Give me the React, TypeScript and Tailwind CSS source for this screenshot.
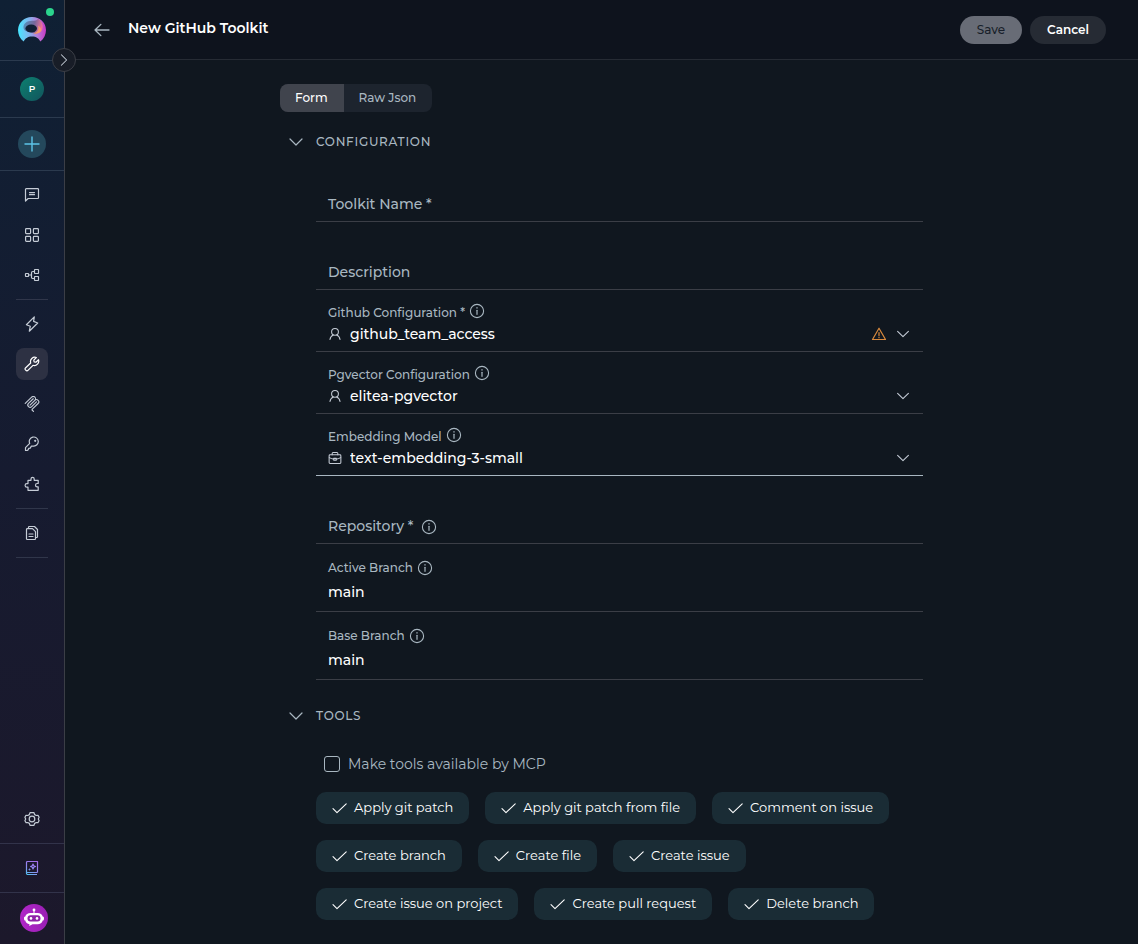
import React, { useState } from "react";
import clsx from "clsx";

type IconProps = { className?: string };

function Icon({
  children,
  className = "size-4",
}: {
  children: React.ReactNode;
  className?: string;
}) {
  return (
    <svg
      viewBox="0 0 16 16"
      fill="none"
      stroke="currentColor"
      strokeWidth="1.2"
      strokeLinejoin="round"
      strokeLinecap="round"
      className={clsx("shrink-0", className)}
      aria-hidden="true"
    >
      {children}
    </svg>
  );
}

const ChatIcon = () => (
  <Icon>
    <path d="M1.5 14V2.5a.8.8 0 0 1 .8-.8h11.4a.8.8 0 0 1 .8.8v8.2a.8.8 0 0 1-.8.8H4.2L1.5 14Z" />
    <path d="M5.5 5.6h5M5.5 7.7h5" />
  </Icon>
);

const GridIcon = () => (
  <Icon>
    <rect x="1.6" y="1.6" width="5" height="5" rx="0.8" />
    <rect x="9.4" y="1.6" width="5" height="5" rx="0.8" />
    <rect x="1.6" y="9.4" width="5" height="5" rx="0.8" />
    <rect x="9.4" y="9.4" width="5" height="5" rx="0.8" />
  </Icon>
);

const FlowIcon = () => (
  <Icon>
    <rect x="1.5" y="6.5" width="3" height="3" rx="0.4" />
    <rect x="10.5" y="2.5" width="4" height="4" rx="0.4" />
    <rect x="10.5" y="9.5" width="4" height="4" rx="0.4" />
    <path d="M4.5 8h3M10.5 4.5H8.8a1.3 1.3 0 0 0-1.3 1.3v4.4a1.3 1.3 0 0 0 1.3 1.3h1.7" />
  </Icon>
);

const BoltIcon = () => (
  <Icon>
    <path d="M10.3.9 2.4 8.7l3.9 1.5-1 5L13.7 7 9.6 5.4l.7-4.5Z" />
  </Icon>
);

const WrenchIcon = () => (
  <Icon>
    <path d="M12.3 1.5A4.4 4.4 0 0 0 6.7 7L1.7 11.7a1.7 1.7 0 0 0 2.5 2.5L9 9.3a4.4 4.4 0 0 0 5.5-5.6l-2.6 2.5-1.8-.3-.3-1.8 2.5-2.6Z" />
  </Icon>
);

const McpIcon = () => (
  <svg viewBox="0 0 24 24" fill="currentColor" className="size-4" aria-hidden="true">
    <path d="M15.688 2.343a2.588 2.588 0 00-3.61 0l-9.626 9.44a.863.863 0 01-1.203 0 .823.823 0 010-1.18l9.626-9.44a4.313 4.313 0 016.016 0 4.116 4.116 0 011.204 3.54 4.3 4.3 0 013.609 1.18l.05.05a4.115 4.115 0 010 5.9l-8.706 8.537a.274.274 0 000 .393l1.788 1.754a.823.823 0 010 1.18.863.863 0 01-1.203 0l-1.788-1.753a1.92 1.92 0 010-2.754l8.706-8.538a2.47 2.47 0 000-3.54l-.05-.049a2.588 2.588 0 00-3.607-.003l-7.172 7.034-.002.002-.098.097a.863.863 0 01-1.204 0 .823.823 0 010-1.18l7.273-7.133a2.47 2.47 0 00-.003-3.537z" />
    <path d="M14.485 4.703a.823.823 0 000-1.18.863.863 0 00-1.204 0l-7.119 6.982a4.115 4.115 0 000 5.9 4.314 4.314 0 006.016 0l7.12-6.982a.823.823 0 000-1.18.863.863 0 00-1.204 0l-7.119 6.982a2.588 2.588 0 01-3.61 0 2.47 2.47 0 010-3.54l7.12-6.982z" />
  </svg>
);

const KeyIcon = () => (
  <Icon>
    <path d="M5.7 7.4A4.5 4.5 0 1 1 9.3 10l-1.9.1-1.2 2-1.5.3-.5 1.3-1 .8H1.5v-2.9l4.2-4.2Z" />
    <circle cx="11.2" cy="4.8" r="0.5" />
  </Icon>
);

const PuzzleIcon = () => (
  <Icon>
    <path d="M4 4.3h3V3a1.6 1.6 0 0 1 3.2 0v1.3h4v3.2h-1a1.7 1.7 0 0 0 0 3.4h1v3.4H4v-3.1H2.9a1.8 1.8 0 0 1 0-3.6H4V4.3Z" />
  </Icon>
);

const DocsIcon = () => (
  <Icon>
    <path d="M2.5 4.5a.8.8 0 0 1 .8-.8h5.2l3 3v7a.8.8 0 0 1-.8.8H3.3a.8.8 0 0 1-.8-.8V4.5Z" />
    <path d="M4.5 3.5V2.3a.8.8 0 0 1 .8-.8h5.2l3 3v7.2a.8.8 0 0 1-.8.8h-1.2M5 9h4M5 11.5h4" />
  </Icon>
);

const SettingsIcon = () => (
  <Icon>
    <circle cx="8" cy="8" r="2.8" />
    <path d="M6 1.7h4l.6 1.9 1.7.9 1.7-.2 1.1 2-.8 1.7.8 1.7-1.2 2-1.6-.2-1.7.9-.6 1.9H6l-.6-1.9-1.7-.9-1.6.2-1.2-2L1.7 8 .9 6.3l1.1-2 1.7.2 1.7-.9L6 1.7Z" />
  </Icon>
);

const UserIcon = () => (
  <Icon className="size-3.5">
    <circle cx="8" cy="5.5" r="3.9" />
    <path d="M2.3 14.3c.3-2.7 1.8-4.4 3.8-5.2M13.7 14.3c-.3-2.7-1.8-4.4-3.8-5.2" />
  </Icon>
);

const BriefcaseIcon = () => (
  <Icon className="size-3.5">
    <rect x="1.3" y="4.3" width="13.4" height="9.9" rx="1" />
    <path d="M4.8 4.3V2.7a.9.9 0 0 1 .9-.9h4.6a.9.9 0 0 1 .9.9v1.6M1.5 7.6c2 1.2 3.6 1.6 5 1.7M14.5 7.6c-2 1.2-3.6 1.6-5 1.7M6.5 8.4h3v2h-3z" />
  </Icon>
);

const InfoIcon = () => (
  <Icon>
    <circle cx="8" cy="8" r="6.6" strokeWidth="1.1" />
    <path d="M8 7.3v4" />
    <circle cx="8" cy="4.9" r="0.2" />
  </Icon>
);

const WarningIcon = () => (
  <Icon className="size-4 text-[#d98a3d]">
    <path d="M8 2.2 1.5 13.5h13L8 2.2Z" />
    <path d="M8 6.5v3.2M8 11.4v.3" />
  </Icon>
);

const ChevronDown = ({ className }: IconProps) => (
  <Icon className={className}>
    <path d="m2 5 6 6 6-6" />
  </Icon>
);

const CheckIcon = () => (
  <Icon>
    <path d="m1 8.7 4 4L14.2 3.8" strokeWidth="1.1" />
  </Icon>
);

function Logo() {
  return (
    <svg viewBox="0 0 28 28" className="size-7" aria-hidden="true">
      <defs>
        <linearGradient id="ring" x1="0" y1="14" x2="28" y2="14" gradientUnits="userSpaceOnUse">
          <stop offset="0" stopColor="#45e6ff" />
          <stop offset="0.4" stopColor="#84b4ee" />
          <stop offset="0.7" stopColor="#b67bd8" />
          <stop offset="1" stopColor="#c838c4" />
        </linearGradient>
        <linearGradient id="swirl" x1="5" y1="6" x2="24" y2="10" gradientUnits="userSpaceOnUse">
          <stop offset="0" stopColor="#4f94c0" />
          <stop offset="0.6" stopColor="#77679b" />
          <stop offset="1" stopColor="#f2709a" />
        </linearGradient>
      </defs>
      <path
        fill="url(#ring)"
        d="M14 1a13.5 13.5 0 0 1 14 13c0 4.5-2.1 8.8-5.6 11.5C20.8 22.5 18.4 20.5 14 20.5s-6.8 2-8.4 5C2.1 22.8 0 18.5 0 14A13.5 13.5 0 0 1 14 1Z"
      />
      <path
        fill="url(#swirl)"
        d="M5.5 12C5 7.5 9 4.7 14 4.7c3 0 4.5-.2 6-1.7 4.5 2.5 6 8 3.5 12-1.5 2-3.5 2.7-6 2.7L7.5 15c-1-.8-1.8-1.8-2-3Z"
      />
      <path d="M15 17.5c4.5-.5 6.5-4 5-8 2.5 1.5 3.8 3.5 3 5.5-1.5 2.3-4.5 3.3-8 2.5Z" fill="#f59a6c" />
      <ellipse cx="13.2" cy="12.5" rx="5.8" ry="4" fill="#111f35" />
    </svg>
  );
}

function AssistantBook() {
  return (
    <svg
      viewBox="0 0 16 16"
      fill="none"
      stroke="url(#book)"
      strokeWidth="1.2"
      strokeLinejoin="round"
      className="size-4"
      aria-hidden="true"
    >
      <defs>
        <linearGradient id="book" x1="12" y1="1" x2="4" y2="15" gradientUnits="userSpaceOnUse">
          <stop stopColor="#a56be8" />
          <stop offset="0.6" stopColor="#8f8cf0" />
          <stop offset="1" stopColor="#52bfee" />
        </linearGradient>
      </defs>
      <path d="M13.5 12.5v-11h-10a1 1 0 0 0-1 1v10.7a1.3 1.3 0 0 0 1.3 1.3h9.2M2.5 12.5h11" />
      <path d="m9 4 .7 1.8 1.8.7-1.8.7L9 9l-.7-1.8-1.8-.7 1.8-.7L9 4Z" />
      <path d="M5.5 8.5v2M4.5 9.5h2" strokeWidth="0.8" />
    </svg>
  );
}

function Robot() {
  return (
    <svg viewBox="0 0 28 28" className="size-7" aria-hidden="true">
      <circle cx="14" cy="6" r="1.4" fill="#fff" />
      <path d="M13.5 6h1v4h-1z" fill="#fff" />
      <path
        fill="#fff"
        d="M10.5 9h7c2.8 0 4.6 1.3 5.2 3.5 1.1.1 1.3.8 1.3 2s-.3 2-1.3 2.1c-.7 2.5-2.5 3.7-5.2 3.7h-5L9.2 22l.3-1.8c-2.3-.3-3.7-1.5-4.2-3.6-1-.1-1.3-.9-1.3-2.1s.2-1.9 1.3-2C5.9 10.3 7.7 9 10.5 9Z"
      />
      <rect x="7.5" y="11.3" width="13" height="6.2" rx="3" fill="#8f22a8" />
      <circle cx="11" cy="14.4" r="1.3" fill="#fff" />
      <circle cx="17" cy="14.4" r="1.3" fill="#fff" />
    </svg>
  );
}

const navGroups = [
  [
    { name: "Chat", icon: ChatIcon },
    { name: "Agents", icon: GridIcon },
    { name: "Pipelines", icon: FlowIcon },
  ],
  [
    { name: "Skills", icon: BoltIcon },
    { name: "Toolkits", icon: WrenchIcon },
    { name: "MCPs", icon: McpIcon },
    { name: "Credentials", icon: KeyIcon },
    { name: "Applications", icon: PuzzleIcon },
  ],
  [{ name: "Artifacts", icon: DocsIcon }],
];

function Sidebar() {
  return (
    <aside className="sticky top-0 flex h-screen w-[65px] shrink-0 flex-col border-r border-[#3b3e46] bg-linear-to-b from-[#0f2034] via-[#161b30] to-[#1c182b] text-[#c5ccd6]">
      <div className="relative flex h-[61px] shrink-0 items-center justify-center border-b border-[#2b3a4e]">
        <Logo />
        <span className="absolute top-2 right-2.5 size-2 rounded-full bg-[#2bd48d]" />
        <button
          aria-label="Expand sidebar"
          className="absolute -right-3 -bottom-3 z-10 flex size-6 items-center justify-center rounded-full border border-[#3b3e46] bg-[#181d27] text-[#c5ccd6]"
        >
          <ChevronDown className="size-3.5 -rotate-90" />
        </button>
      </div>
      <div className="flex h-[57px] shrink-0 items-center justify-center border-b border-[#2b3a4e]">
        <button className="size-6 rounded-full bg-linear-to-br from-[#0b8070] to-[#11555c] text-[9px] font-semibold text-white">
          P
        </button>
      </div>
      <div className="flex h-[53px] shrink-0 items-center justify-center border-b border-[#2b3a4e]">
        <button
          aria-label="Create"
          className="flex size-7 items-center justify-center rounded-full bg-[#24485c] text-[#5cc4e8]"
        >
          <Icon>
            <path d="M8 1v14M1 8h14" strokeWidth="1.4" />
          </Icon>
        </button>
      </div>

      <nav className="flex flex-col items-center gap-2 py-2">
        {navGroups.map((group) => (
          <React.Fragment key={group[0].name}>
            {group.map(({ name, icon: NavIcon }) => (
              <a
                key={name}
                href="#"
                aria-label={name}
                className={clsx(
                  "flex size-8 items-center justify-center rounded-lg",
                  name === "Toolkits" && "bg-[#2d3143] text-white",
                )}
              >
                <NavIcon />
              </a>
            ))}
            <hr className="w-8 border-[#30364a]" />
          </React.Fragment>
        ))}
      </nav>

      <div className="mt-auto flex h-12 items-center justify-center">
        <a href="#" aria-label="Settings">
          <SettingsIcon />
        </a>
      </div>
      <div className="flex h-[50px] shrink-0 items-center justify-center border-y border-[#32334a]">
        <a href="#" aria-label="Guide">
          <AssistantBook />
        </a>
      </div>
      <div className="flex h-[51px] shrink-0 items-center justify-center pb-0.5 pl-1">
        <button aria-label="Assistant" className="rounded-full bg-linear-to-r from-[#b026c8] to-[#9a1fb4]">
          <Robot />
        </button>
      </div>
    </aside>
  );
}

function SectionTitle({ children }: { children: React.ReactNode }) {
  return (
    <button className="flex h-6 items-center gap-3 px-2 text-xs font-medium tracking-[0.06em] text-[#a9b7c1] uppercase">
      <ChevronDown className="size-4" />
      {children}
    </button>
  );
}

/* Empty field: the label sits on the input line */
function EmptyField({ id, label, info }: { id: string; label: string; info?: boolean }) {
  return (
    <div className="flex h-[68px] items-end gap-2 border-b border-[#3b3e46] px-3 pb-[5px] text-sm font-medium text-[#a9b7c1]">
      <label htmlFor={id} className="leading-6">
        {label}
      </label>
      {info && (
        <span className="pb-[3px]">
          <InfoIcon />
        </span>
      )}
      <input id={id} className="h-6 min-w-0 flex-1 bg-transparent text-white outline-none" />
    </div>
  );
}

function FieldLabel({
  id,
  children,
  className,
}: {
  id: string;
  children: React.ReactNode;
  className?: string;
}) {
  return (
    <div className={clsx("flex h-5 gap-1 text-[#a9b7c1]", className)}>
      <label htmlFor={id} className="text-xs leading-5 font-medium">
        {children}
      </label>
      <InfoIcon />
    </div>
  );
}

function SelectField({
  id,
  label,
  value,
  icon,
  warning,
  active,
}: {
  id: string;
  label: string;
  value: string;
  icon: React.ReactNode;
  warning?: boolean;
  active?: boolean;
}) {
  return (
    <div
      className={clsx(
        "h-[62px] border-b px-3 pt-[13px]",
        active ? "border-[#a9b7c1]" : "border-[#3b3e46]",
      )}
    >
      <FieldLabel id={id} className="items-start">
        {label}
      </FieldLabel>
      <div className="flex h-[22px] items-center gap-2 text-[#c5ccd6]">
        {icon}
        <select
          id={id}
          defaultValue={value}
          className="min-w-0 flex-1 appearance-none bg-transparent text-sm font-medium text-white outline-none"
        >
          <option value={value}>{value}</option>
        </select>
        {warning && <WarningIcon />}
        <ChevronDown className="size-4 scale-90" />
      </div>
    </div>
  );
}

function TextField({ id, label, value }: { id: string; label: string; value: string }) {
  return (
    <div className="h-[68px] border-b border-[#3b3e46] px-3 pt-[14px]">
      <FieldLabel id={id} className="items-center">
        {label}
      </FieldLabel>
      <input
        id={id}
        defaultValue={value}
        className="mt-0.5 h-6 w-full bg-transparent text-sm font-medium text-white outline-none"
      />
    </div>
  );
}

const tools = [
  "Apply git patch",
  "Apply git patch from file",
  "Comment on issue",
  "Create branch",
  "Create file",
  "Create issue",
  "Create issue on project",
  "Create pull request",
  "Delete branch",
];

export default function App() {
  const [view, setView] = useState("Form");

  return (
    <div className="flex min-h-screen bg-[#10171f] font-['Montserrat','Inter',sans-serif] text-white">
      <Sidebar />
      <main className="min-w-0 flex-1">
        <header className="flex h-[60px] items-center border-b border-[#262b34] bg-[#0e131d] pr-8 pl-7">
          <button aria-label="Back" className="text-[#a9b7c1]">
            <Icon className="size-[18px]">
              <path d="M14.2 8H1.8M7 3 1.8 8 7 13" />
            </Icon>
          </button>
          <h1 className="ml-[17px] pb-1 text-sm leading-6 font-semibold">New GitHub Toolkit</h1>
          <div className="ml-auto flex gap-2 text-xs">
            <button disabled className="h-7 rounded-full bg-[#686c76] px-[17px] font-medium text-[#181f2a]">
              Save
            </button>
            <button className="h-7 rounded-full bg-[#262b34] px-[17px] font-semibold text-white">
              Cancel
            </button>
          </div>
        </header>

        <div className="mx-auto w-full max-w-[643px] py-6">
          <div className="flex w-max overflow-hidden rounded-lg bg-[#1d242e] text-xs font-medium">
            {["Form", "Raw Json"].map((name) => (
              <button
                key={name}
                onClick={() => setView(name)}
                className={clsx(
                  "h-7 border-r border-transparent px-[15px]",
                  view === name ? "bg-[#40444d] text-white" : "text-[#a9b7c1]",
                )}
              >
                {name}
              </button>
            ))}
          </div>

          <section className="mt-[18px]">
            <SectionTitle>Configuration</SectionTitle>
            <div className="pl-9">
              <EmptyField id="name" label="Toolkit Name *" />
              <EmptyField id="description" label="Description" />
              <SelectField
                id="github"
                label="Github Configuration *"
                value="github_team_access"
                icon={<UserIcon />}
                warning
              />
              <SelectField
                id="pgvector"
                label="Pgvector Configuration"
                value="elitea-pgvector"
                icon={<UserIcon />}
              />
              <SelectField
                id="embedding"
                label="Embedding Model"
                value="text-embedding-3-small"
                icon={<BriefcaseIcon />}
                active
              />
              <EmptyField id="repository" label="Repository *" info />
              <TextField id="active-branch" label="Active Branch" value="main" />
              <TextField id="base-branch" label="Base Branch" value="main" />
            </div>
          </section>

          <section className="mt-6">
            <SectionTitle>Tools</SectionTitle>
            <div className="pl-9">
              <label className="mt-6 flex h-6 items-center gap-2 pl-2 text-sm text-[#a9b7c1]">
                <input
                  type="checkbox"
                  className="size-4 appearance-none rounded-[3px] border border-[#a9b7c1] checked:bg-[#a9b7c1]"
                />
                Make tools available by MCP
              </label>
              <div className="mt-4 flex flex-wrap gap-4">
                {tools.map((tool) => (
                  <button
                    key={tool}
                    className="flex h-8 items-center gap-[6px] rounded-[10px] bg-[#1a2c35] px-4 text-[13px] text-white"
                  >
                    <CheckIcon />
                    {tool}
                  </button>
                ))}
              </div>
            </div>
          </section>
        </div>
      </main>
    </div>
  );
}
